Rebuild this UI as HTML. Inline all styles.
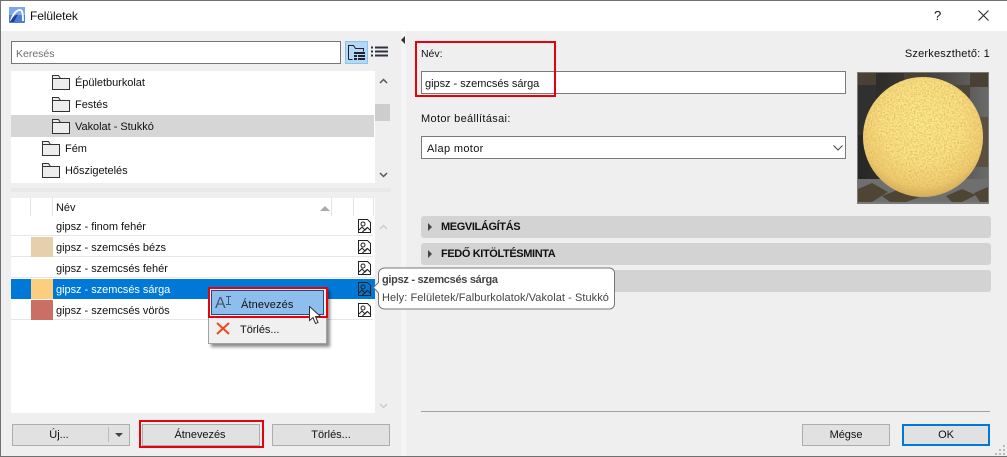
<!DOCTYPE html>
<html><head><meta charset="utf-8"><style>
html,body{margin:0;padding:0;background:#efefef}
#p{position:relative;width:1007px;height:457px;overflow:hidden;background:#efefef;font:11px "Liberation Sans",sans-serif;color:#111;letter-spacing:-.03px}
#p div{position:absolute;box-sizing:border-box;white-space:nowrap}
#p svg{position:absolute}
.t{line-height:14px}
.btn{background:#e1e1e1;border:1px solid #adadad;text-align:center;line-height:20px;height:22px}
.row{left:11px;width:362px;height:20px;background:#fff;border-bottom:1px solid #e6e6e6}
.lab{left:56px;line-height:14px}
.bar{left:421px;width:570px;height:22px;background:#d3d3d3;border-radius:3px;font-weight:bold;line-height:23px;padding-left:20px;color:#111;letter-spacing:-.38px}
.bar:before{content:"";position:absolute;left:7px;top:7px;border-left:4px solid #444;border-top:4px solid transparent;border-bottom:4px solid transparent}
.red{border:2px solid #e8000d}
.inp{background:#fff;border:1px solid #7a7a7a}
</style></head><body><div id="p">
<svg width="0" height="0" style="position:absolute"><defs>
<symbol id="im" viewBox="0 0 13 14"><path d="M.5.5h9l3 3v10H.5z" fill="#fff" stroke="#222"/><circle cx="5" cy="5" r="2" fill="none" stroke="#222"/><path d="M1 11l3-3 3 3 2.500-2.500 3 3M4 13.500l5-5" fill="none" stroke="#222"/></symbol>
<symbol id="fo" viewBox="0 0 18 16"><path d="M.5 15.500V1.500h6l2 3h9v11z" fill="#ededed" stroke="#333"/><path d="M.5 4.500h8" stroke="#333"/></symbol>
</defs></svg>

<!-- titlebar -->
<div style="left:0;top:0;width:1007px;height:31px;background:#fff"></div>
<div style="left:0;top:0;width:1007px;height:1px;background:#707070"></div>
<div style="left:0;top:0;width:1px;height:457px;background:#707070"></div>
<svg style="left:9px;top:7px" width="16" height="16" viewBox="0 0 16 16"><rect width="16" height="16" rx="1" fill="#4a7fd6"/><rect x="0" y="0" width="16" height="8" fill="#7fa8ea"/><path d="M2 14C4 6 8 3 11 3c2 0 3 2 3 11" fill="none" stroke="#fff" stroke-width="1.800"/><path d="M1 15h4l4-8-5 3z" fill="#1f3f9a"/></svg>
<div class="t" style="left:30px;top:9px;font-size:12px;letter-spacing:-.1px">Felületek</div>
<div class="t" style="left:934px;top:9px;font-size:13px">?</div>
<svg style="left:978px;top:10px" width="11" height="11"><path d="M.5.500l10 10M10.500.500l-10 10" stroke="#222" fill="none"/></svg>

<!-- search -->
<div class="inp" style="left:11px;top:41px;width:330px;height:23px;border-color:#777"></div>
<div class="t" style="left:16px;top:47px;color:#6d6d6d;font-size:10.500px;letter-spacing:0">Keresés</div>
<div style="left:345px;top:41px;width:23px;height:23px;background:#b5d8f5;border:1px solid #8cc2ec"></div>
<svg style="left:348px;top:45px" width="18" height="16" viewBox="0 0 18 16"><path d="M.5 14.500V.5h5l2 3h8v3" fill="none" stroke="#223"/><path d="M.5 14.500h4" fill="none" stroke="#223"/><path d="M6 7h11v2H6zM6 10h3v2H6zM10 10h7v2H10zM6 13h3v2H6zM10 13h7v2H10z" fill="#223"/></svg>
<svg style="left:371px;top:46px" width="17" height="12"><path d="M0 1.500h2M4 1.500h13M0 5.500h2M4 5.500h13M0 9.500h2M4 9.500h13" stroke="#2b3440" stroke-width="2"/></svg>

<!-- tree -->
<div style="left:11px;top:71px;width:364px;height:112px;background:#fff"></div>
<div style="left:11px;top:115px;width:363px;height:22px;background:#d6d6d6"></div>
<div style="left:375px;top:104px;width:15px;height:17px;background:#cdcdcd"></div>
<svg style="left:379px;top:78px" width="9" height="6"><path d="M1 5l3.500-3.500L8 5" fill="none" stroke="#555" stroke-width="1.500"/></svg>
<svg style="left:379px;top:172px" width="9" height="6"><path d="M1 1l3.500 3.500L8 1" fill="none" stroke="#555" stroke-width="1.500"/></svg>
<svg style="left:52px;top:74px" width="18" height="16"><use href="#fo"/></svg>
<svg style="left:52px;top:96px" width="18" height="16"><use href="#fo"/></svg>
<svg style="left:52px;top:118px" width="18" height="16"><use href="#fo"/></svg>
<svg style="left:42px;top:140px" width="18" height="16"><use href="#fo"/></svg>
<svg style="left:42px;top:162px" width="18" height="16"><use href="#fo"/></svg>
<div class="t" style="left:75px;top:76px">Épületburkolat</div>
<div class="t" style="left:75px;top:98px">Festés</div>
<div class="t" style="left:75px;top:120px">Vakolat - Stukkó</div>
<div class="t" style="left:65px;top:142px">Fém</div>
<div class="t" style="left:65px;top:164px">Hőszigetelés</div>

<div style="left:11px;top:188px;width:380px;height:4px;background:#e8e8e8"></div>
<div style="left:401px;top:31px;width:5px;height:425px;background:#f5f5f5"></div>
<div style="left:401px;top:36px;border-right:4px solid #333;border-top:4px solid transparent;border-bottom:4px solid transparent"></div>
<div style="left:0;top:456px;width:1007px;height:1px;background:#707070"></div>

<!-- list -->
<div style="left:11px;top:198px;width:364px;height:215px;background:#fff"></div>
<div style="left:30px;top:198px;width:1px;height:18px;background:#e3e3e3"></div>
<div style="left:52px;top:198px;width:1px;height:18px;background:#e3e3e3"></div>
<div style="left:331px;top:198px;width:1px;height:18px;background:#e3e3e3"></div>
<div style="left:353px;top:198px;width:1px;height:18px;background:#e3e3e3"></div>
<div style="left:373px;top:198px;width:1px;height:18px;background:#e3e3e3"></div>
<div class="t" style="left:56px;top:201px">Név</div>
<div style="left:320px;top:206px;border-bottom:5px solid #aaa;border-left:5px solid transparent;border-right:5px solid transparent"></div>
<div class="row" style="top:216px"></div>
<div class="row" style="top:237px"></div>
<div class="row" style="top:258px"></div>
<div class="row" style="top:279px;background:#0078d7;border:0;height:20px;width:364px"></div>
<div class="row" style="top:300px"></div>
<div style="left:31px;top:237px;width:22px;height:20px;background:#e6cfac"></div>
<div style="left:31px;top:279px;width:22px;height:20px;background:#fdce7d"></div>
<div style="left:31px;top:300px;width:22px;height:20px;background:#cb6f64"></div>
<div class="lab" style="top:220px">gipsz - finom fehér</div>
<div class="lab" style="top:241px">gipsz - szemcsés bézs</div>
<div class="lab" style="top:262px">gipsz - szemcsés fehér</div>
<div class="lab" style="top:283px;color:#fff">gipsz - szemcsés sárga</div>
<div class="lab" style="top:304px">gipsz - szemcsés vörös</div>
<svg style="left:358px;top:219px" width="13" height="14"><use href="#im"/></svg>
<svg style="left:358px;top:240px" width="13" height="14"><use href="#im"/></svg>
<svg style="left:358px;top:261px" width="13" height="14"><use href="#im"/></svg>
<svg style="left:358px;top:282px" width="13" height="14" viewBox="0 0 13 14"><path d="M.5.5h9l3 3v10H.5z" fill="#0078d7" stroke="#222"/><circle cx="5" cy="5" r="2" fill="none" stroke="#222"/><path d="M1 11l3-3 3 3 2.500-2.500 3 3M4 13.500l5-5" fill="none" stroke="#222"/></svg>
<svg style="left:358px;top:303px" width="13" height="14"><use href="#im"/></svg>
<svg style="left:379px;top:224px" width="9" height="6"><path d="M1 5l3.500-3.500L8 5" fill="none" stroke="#ccc" stroke-width="1.500"/></svg>
<svg style="left:379px;top:403px" width="9" height="6"><path d="M1 1l3.500 3.500L8 1" fill="none" stroke="#ccc" stroke-width="1.500"/></svg>

<!-- bottom left buttons -->
<div class="btn" style="left:12px;top:424px;width:118px;padding-right:24px">Új...</div>
<div style="left:108px;top:427px;width:1px;height:15px;background:#bbb"></div>
<div style="left:115px;top:433px;border-top:4px solid #444;border-left:4px solid transparent;border-right:4px solid transparent"></div>
<div class="red" style="left:139px;top:420px;width:125px;height:28px"></div>
<div class="btn" style="left:142px;top:424px;width:118px;padding-right:2px">Átnevezés</div>
<div class="btn" style="left:272px;top:424px;width:118px">Törlés...</div>

<!-- right -->
<div class="t" style="left:421px;top:47px;font-size:10.500px">Név:</div>
<div class="t" style="right:17px;top:47px;letter-spacing:.2px">Szerkeszthető: 1</div>
<div class="inp" style="left:421px;top:71px;width:425px;height:23px"></div>
<div class="t" style="left:425px;top:77px">gipsz - szemcsés sárga</div>
<div class="red" style="left:415px;top:41px;width:141px;height:56px"></div>
<div class="t" style="left:421px;top:112px;letter-spacing:.33px">Motor beállításai:</div>
<div class="inp" style="left:421px;top:136px;width:425px;height:23px"></div>
<div class="t" style="left:427px;top:142px;letter-spacing:.35px">Alap motor</div>
<svg style="left:833px;top:145px" width="10" height="6"><path d="M.5.500L5 5 9.500.500" fill="none" stroke="#444"/></svg>

<!-- preview -->
<svg style="left:856px;top:71px" width="134" height="134" viewBox="0 0 134 134">
<defs>
<radialGradient id="s" cx=".5" cy=".38" r=".62"><stop offset="0" stop-color="#ffec8c"/><stop offset=".55" stop-color="#fde384"/><stop offset=".85" stop-color="#f2cd6f"/><stop offset="1" stop-color="#d2aa58"/></radialGradient>
<linearGradient id="bg" x1="0" x2="1"><stop offset="0" stop-color="#262626"/><stop offset=".5" stop-color="#403c36"/><stop offset="1" stop-color="#6a6a6a"/></linearGradient>
<filter id="n" x="0" y="0" width="100%" height="100%"><feTurbulence type="fractalNoise" baseFrequency=".6" numOctaves="2" seed="4"/><feColorMatrix values="0 0 0 0 .68 0 0 0 0 .46 0 0 0 0 .12 1.300 1.300 0 0 -1.050"/><feComposite in2="SourceGraphic" operator="in"/></filter>
</defs>
<rect width="134" height="134" fill="#eee"/>
<rect x="1" y="1" width="132" height="132" fill="#7b7b7b"/>
<rect x="2" y="2" width="130" height="129" fill="url(#bg)"/>
<path d="M2 2h18v12H2zM48 2h24v10H48zM114 2h18v14h-18z" fill="#4a4134"/>
<path d="M2 14h18v50H2z" fill="#303030"/><path d="M96 14h18v30H96z" fill="#4e453a"/><path d="M112 46h20v50h-20z" fill="#5b4f41"/>
<path d="M2 108h130v23H2z" fill="#6f6f6f"/>
<path d="M2 118l14-6 16 9-16 10H2zM26 125l18-7 20 8-14 5H34zM90 125l16-7 14 6-14 7H96zM118 122l14-6v15h-8z" fill="#4f4535"/>
<circle cx="67" cy="66" r="60" fill="url(#s)"/>
<circle cx="67" cy="66" r="60" fill="#fff" filter="url(#n)"/>
</svg>

<!-- bars -->
<div class="bar" style="top:216px">MEGVILÁGÍTÁS</div>
<div class="bar" style="top:243px">FEDŐ KITÖLTÉSMINTA</div>
<div class="bar" style="top:270px"></div>

<!-- tooltip -->
<svg style="left:372px;top:266px" width="246" height="44"><path d="M6.500 8a6 6 0 0 1 6-6h225a5 5 0 0 1 5 5v31a5 5 0 0 1-5 5h-225a6 6 0 0 1-6-6V27L1.500 21.500l5-5z" fill="#fff" stroke="#777"/></svg>
<div class="t" style="left:382px;top:273px;font-weight:bold;color:#444;letter-spacing:-.3px">gipsz - szemcsés sárga</div>
<div class="t" style="left:382px;top:291px;color:#444;letter-spacing:.06px">Hely: Felületek/Falburkolatok/Vakolat - Stukkó</div>

<!-- context menu -->
<div style="left:208px;top:287px;width:119px;height:57px;background:#f0f0f0;border:1px solid #a0a0a0;box-shadow:3px 3px 3px rgba(0,0,0,.45)"></div>
<div style="left:211px;top:290px;width:113px;height:25px;background:#8ebeee;border:1px solid #1f4e79"></div>
<div class="red" style="left:208px;top:287px;width:120px;height:31px"></div>
<div class="t" style="left:215px;top:297px;font-size:16px;color:#44566e;letter-spacing:0">A</div>
<svg style="left:226px;top:296px" width="5" height="9"><path d="M0 .5h5M0 8.500h5M2.500.5v8" stroke="#44566e" fill="none"/></svg>
<div class="t" style="left:241px;top:298px;letter-spacing:.12px">Átnevezés</div>
<svg style="left:216px;top:322px" width="14" height="13"><path d="M1 1l12 11M13 1L1 12" stroke="#f0481e" stroke-width="2" fill="none"/></svg>
<div class="t" style="left:240px;top:323px">Törlés...</div>
<svg style="left:309px;top:306px" width="12" height="19" viewBox="0 0 12 19"><path d="M.5.500v14l3.500-3 2.500 6 2.500-1-2.500-6h5z" fill="#fff" stroke="#333"/></svg>

<!-- footer right -->
<div style="left:421px;top:411px;width:569px;height:1px;background:#a0a0a0"></div>
<div class="btn" style="left:802px;top:424px;width:88px">Mégse</div>
<div class="btn" style="left:902px;top:424px;width:88px;border:2px solid #0078d7;line-height:19px">OK</div>
<svg style="left:994px;top:444px" width="12" height="12"><path d="M9 1h2v2H9zM5 5h2v2H5zM9 5h2v2H9zM1 9h2v2H1zM5 9h2v2H5zM9 9h2v2H9z" fill="#bbb"/></svg>
</div></body></html>
